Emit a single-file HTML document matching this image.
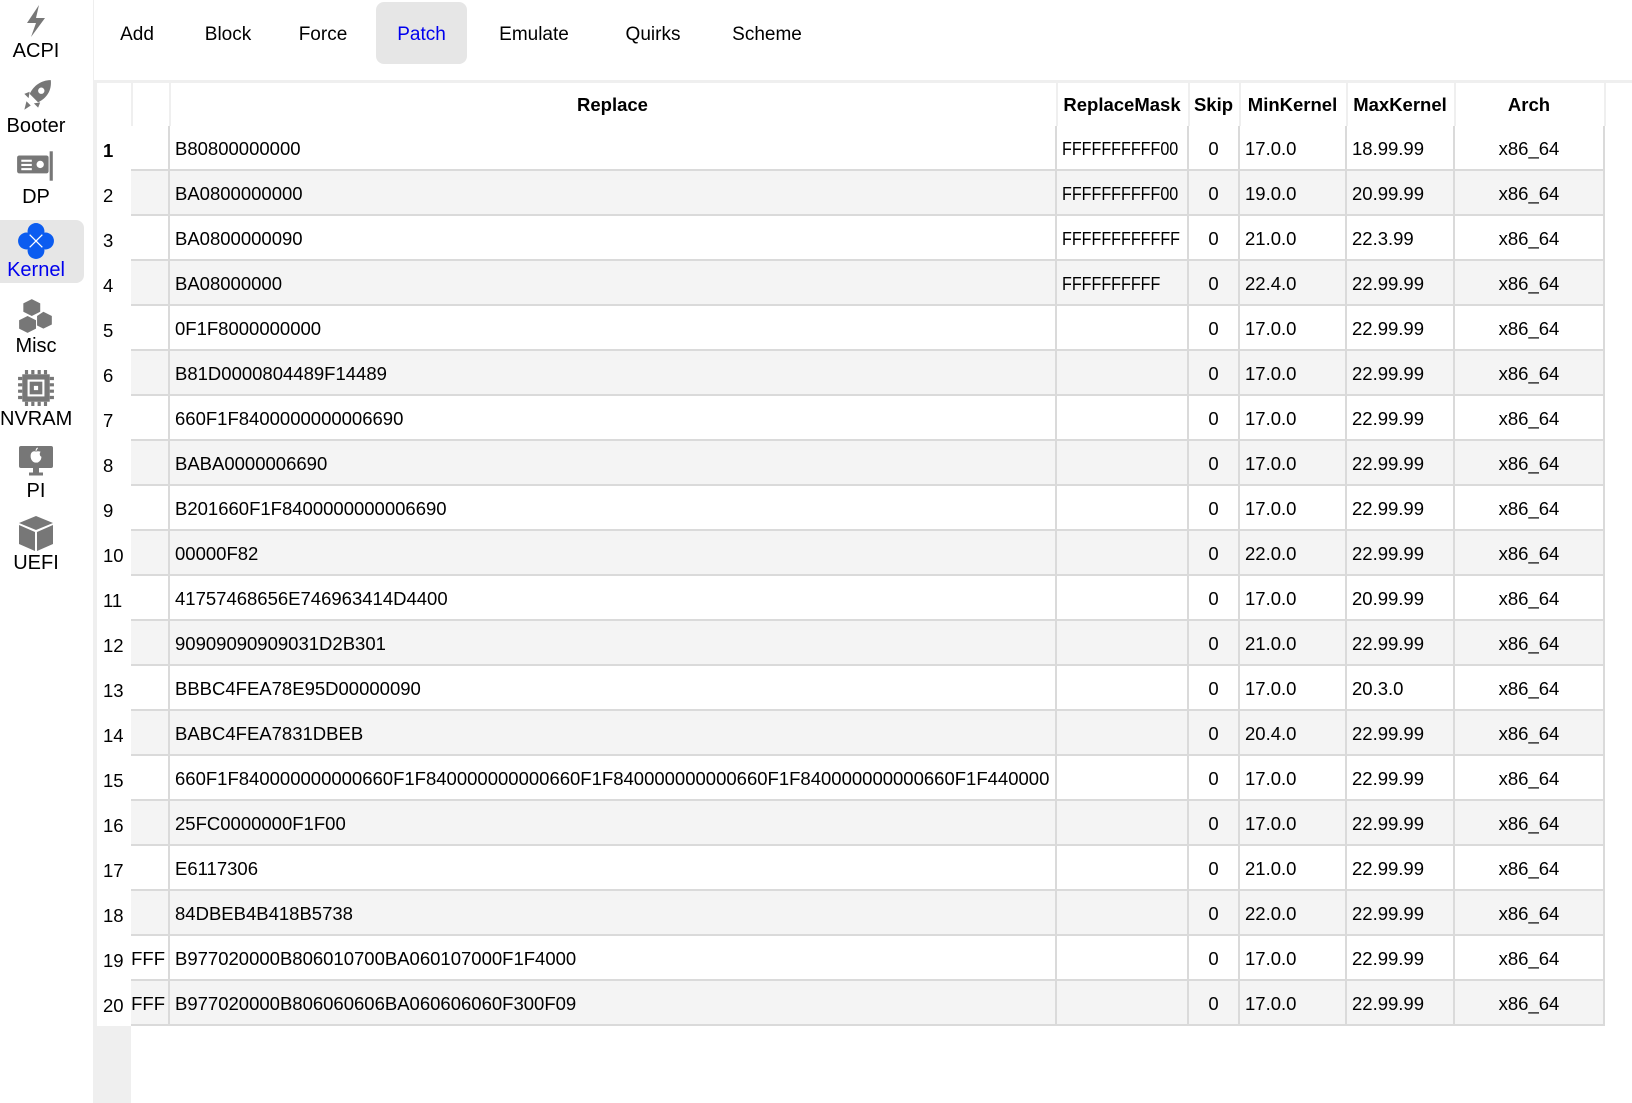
<!DOCTYPE html>
<html><head><meta charset="utf-8"><style>
*{margin:0;padding:0;box-sizing:border-box}
body{width:1632px;height:1103px;background:#fff;position:relative;overflow:hidden;font-family:"Microsoft YaHei","Liberation Sans","Noto Sans CJK SC",sans-serif;color:#000}
.abs{position:absolute}
.side{left:0;top:0;width:93px;height:1103px;background:#fff}
.item{position:absolute;left:0;width:72px;text-align:center;font-size:20px}
.item svg{display:block;margin:0 auto}
.tab{position:absolute;top:2px;height:66px;line-height:66px;font-size:19px;text-align:center}
.cell{position:absolute;font-size:18.5px;white-space:nowrap;overflow:hidden;line-height:45px;height:45px}
.sq{display:inline-block;transform:scaleX(0.87);transform-origin:left center}
</style></head><body>
<div class="abs side"></div>
<div class="abs" style="left:0;top:220px;width:84px;height:63px;background:#e6e6e6;border-radius:0 8px 8px 0"></div>
<div class="item" style="top:3px"><svg width="34" height="36" viewBox="0 0 34 34"><path d="M20 1 L8 19 L17 19 L12 33 L26 14 L17 14 Z" fill="#777"/></svg><div style="margin-top:1px">ACPI</div></div>
<div class="item" style="top:78px"><svg width="36" height="36" viewBox="0 0 34 34"><path d="M31 2 C22 2 15 7 11 15 L19 23 C27 19 32 12 31 2Z M6 15 L11 13 L10 19Z M19 28 L21 23 L15 24Z" fill="#777"/><circle cx="22" cy="12" r="3" fill="#fff"/><path d="M8 22 L12 26 L6 30Z" fill="#777"/></svg><div style="margin-top:1px">Booter</div></div>
<div class="item" style="top:148px"><svg width="42" height="36" viewBox="0 0 40 34"><rect x="2" y="7" width="30" height="17" rx="2" fill="#777"/><rect x="33" y="3" width="3" height="28" fill="#777"/><rect x="6" y="11" width="10" height="2" fill="#fff"/><rect x="6" y="15" width="10" height="2" fill="#fff"/><rect x="6" y="19" width="10" height="2" fill="#fff"/><circle cx="24" cy="15.5" r="3.5" fill="#fff"/></svg><div style="margin-top:2px">DP</div></div>
<div class="item" style="top:222px"><svg width="38" height="38" viewBox="0 0 36 36"><circle cx="18" cy="9" r="8" fill="#0b5cf0"/><circle cx="18" cy="27" r="8" fill="#0b5cf0"/><circle cx="9" cy="18" r="8" fill="#0b5cf0"/><circle cx="27" cy="18" r="8" fill="#0b5cf0"/><path d="M12 12 L24 24 M24 12 L12 24" stroke="#fff" stroke-width="1.2"/></svg><div style="margin-top:-1px;color:#0000ee">Kernel</div></div>
<div class="item" style="top:297px"><svg width="38" height="38" viewBox="0 0 36 36"><path d="M14 2 L22 6 L22 14 L14 18 L6 14 L6 6Z" fill="#777"/><path d="M10 18 L18 22 L18 30 L10 34 L2 30 L2 22Z" fill="#777"/><path d="M25 14 L33 18 L33 26 L25 30 L19 27 L19 18Z" fill="#777"/></svg><div style="margin-top:0px">Misc</div></div>
<div class="item" style="top:369px"><svg width="38" height="38" viewBox="0 0 36 36"><rect x="5" y="5" width="26" height="26" fill="#777"/><path d="M9 1v4M15 1v4M21 1v4M27 1v4M9 31v4M15 31v4M21 31v4M27 31v4M1 9h4M1 15h4M1 21h4M1 27h4M31 9h4M31 15h4M31 21h4M31 27h4" stroke="#777" stroke-width="3"/><rect x="10" y="10" width="16" height="16" fill="#fff"/><rect x="12" y="12" width="12" height="12" fill="#777"/><rect x="16" y="16" width="4" height="4" fill="#fff"/></svg><div style="margin-top:1px">NVRAM</div></div>
<div class="item" style="top:443px"><svg width="38" height="36" viewBox="0 0 38 36"><rect x="2" y="3" width="34" height="22" rx="2" fill="#777"/><path d="M16 25 L22 25 L22 31 L16 31Z" fill="#777"/><path d="M12 31h14" stroke="#777" stroke-width="3"/><path d="M19 9 C17 8 14 9 14 13 C14 17 17 20 19 19 C21 20 24 17 24 14 C22 13 22 10 23 9 C21 8 20 9 19 9Z M19 8 C19 6 20 5 21 5" fill="#fff" stroke="#fff" stroke-width="0.8"/></svg><div style="margin-top:1px">PI</div></div>
<div class="item" style="top:514px"><svg width="38" height="38" viewBox="0 0 38 38"><path d="M19 2 L36 9 L19 16 L2 9Z" fill="#777"/><path d="M2 11 L18 18 L18 37 L2 30Z" fill="#777"/><path d="M36 11 L20 18 L20 37 L36 30Z" fill="#777"/></svg><div style="margin-top:0px">UEFI</div></div>
<div class="abs" style="left:93px;top:0;width:1px;height:83px;background:#eee"></div>
<div class="abs" style="left:376px;top:2px;width:91px;height:62px;background:#e6e6e6;border-radius:8px"></div>
<div class="tab" style="left:97px;width:80px">Add</div>
<div class="tab" style="left:188px;width:80px">Block</div>
<div class="tab" style="left:283px;width:80px">Force</div>
<div class="tab" style="left:376px;width:91px;color:#0000ee">Patch</div>
<div class="tab" style="left:484px;width:100px">Emulate</div>
<div class="tab" style="left:603px;width:100px">Quirks</div>
<div class="tab" style="left:717px;width:100px">Scheme</div>
<div class="abs" style="left:93px;top:80px;width:1539px;height:3px;background:#efefef"></div>
<div class="abs" style="left:93px;top:83px;width:4px;height:1020px;background:#efefef"></div>
<div class="abs" style="left:93px;top:1026px;width:38px;height:77px;background:#efefef"></div>
<div id="t"></div>
<script>
var cols=[[131,169],[169,1056],[1056,1188],[1188,1239],[1239,1346],[1346,1454],[1454,1604]];
var rows=[
["","B80800000000","FFFFFFFFFF00","17.0.0","18.99.99"],
["","BA0800000000","FFFFFFFFFF00","19.0.0","20.99.99"],
["","BA0800000090","FFFFFFFFFFFF","21.0.0","22.3.99"],
["","BA08000000","FFFFFFFFFF","22.4.0","22.99.99"],
["","0F1F8000000000","","17.0.0","22.99.99"],
["","B81D0000804489F14489","","17.0.0","22.99.99"],
["","660F1F8400000000006690","","17.0.0","22.99.99"],
["","BABA0000006690","","17.0.0","22.99.99"],
["","B201660F1F8400000000006690","","17.0.0","22.99.99"],
["","00000F82","","22.0.0","22.99.99"],
["","41757468656E746963414D4400","","17.0.0","20.99.99"],
["","90909090909031D2B301","","21.0.0","22.99.99"],
["","BBBC4FEA78E95D00000090","","17.0.0","20.3.0"],
["","BABC4FEA7831DBEB","","20.4.0","22.99.99"],
["","660F1F840000000000660F1F840000000000660F1F840000000000660F1F840000000000660F1F440000","","17.0.0","22.99.99"],
["","25FC0000000F1F00","","17.0.0","22.99.99"],
["","E6117306","","21.0.0","22.99.99"],
["","84DBEB4B418B5738","","22.0.0","22.99.99"],
["FFFF","B977020000B806010700BA060107000F1F4000","","17.0.0","22.99.99"],
["FFFF","B977020000B806060606BA060606060F300F09","","17.0.0","22.99.99"]];
var h='';
var hd=["","Replace","ReplaceMask","Skip","MinKernel","MaxKernel","Arch"];
h+='<div class="abs" style="left:97px;top:83px;width:1507px;height:43px;background:#fff"></div>';
for(var c=0;c<7;c++){var L=cols[c][0],R=cols[c][1];
h+='<div class="cell" style="left:'+L+'px;top:83px;width:'+(R-L)+'px;height:43px;line-height:43px;text-align:center;font-weight:bold">'+hd[c]+'</div>';
h+='<div class="abs" style="left:'+(L)+'px;top:83px;width:2px;height:'+(c==0?43:92)+'px;background:#efefef"></div>';}
h+='<div class="abs" style="left:1604px;top:83px;width:2px;height:43px;background:#efefef"></div>';
for(var i=0;i<20;i++){var y=126+i*45,r=rows[i];
var bg=i%2?'#f4f4f4':'#fff';
h+='<div class="abs" style="left:131px;top:'+y+'px;width:1473px;height:45px;background:'+bg+';border-bottom:2px solid #dadada"></div>';
h+='<div class="cell" style="left:103px;top:'+(y+2)+'px;width:28px;'+(i==0?'font-weight:bold':'')+'">'+(i+1)+'</div>';
var vals=[r[0],r[1],r[2],"0",r[3],r[4],"x86_64"];
for(var c=0;c<7;c++){var L=cols[c][0],R=cols[c][1],st='',v=vals[c];
if(c==0)st='text-align:right;padding-right:4px;direction:rtl;';
else if(c==3||c==6)st='text-align:center;';
else if(c==2){st='padding-left:6px;';v='<span class="sq">'+v+'</span>';}
else st='padding-left:6px;';
h+='<div class="cell" style="left:'+L+'px;top:'+y+'px;width:'+(R-L)+'px;'+st+'">'+v+'</div>';}
}
for(var c=1;c<7;c++){h+='<div class="abs" style="left:'+(cols[c][0]-1)+'px;top:126px;width:2px;height:900px;background:#dadada"></div>';}
h+='<div class="abs" style="left:1603px;top:126px;width:2px;height:900px;background:#dadada"></div>';
document.getElementById('t').innerHTML=h;
</script>
</body></html>
